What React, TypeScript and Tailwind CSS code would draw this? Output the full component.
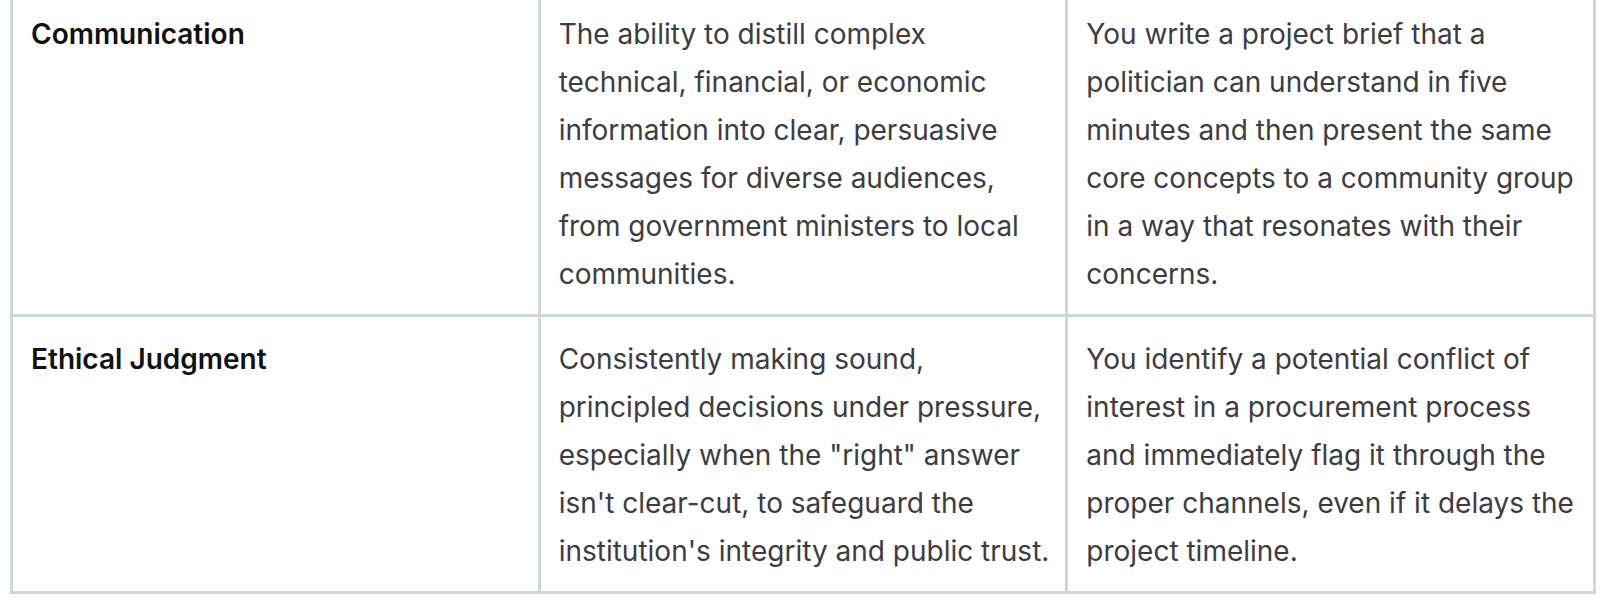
const ROWS = [
  {
    skill: "Communication",
    meaning:
      "The ability to distill complex technical, financial, or economic information into clear, persuasive messages for diverse audiences, from government ministers to local communities.",
    example:
      "You write a project brief that a politician can understand in five minutes and then present the same core concepts to a community group in a way that resonates with their concerns.",
  },
  {
    skill: "Ethical Judgment",
    meaning:
      "Consistently making sound, principled decisions under pressure, especially when the \"right\" answer isn't clear-cut, to safeguard the institution's integrity and public trust.",
    example:
      "You identify a potential conflict of interest in a procurement process and immediately flag it through the proper channels, even if it delays the project timeline.",
  },
];

export default function App() {
  return (
    <div className="min-h-screen bg-white px-[10px] pb-[10px] font-['Inter','Liberation_Sans',sans-serif]">
      <table className="-mt-[11px] w-full table-fixed border-collapse border-[3px] border-[#cdd5df]">
        <tbody>
          {ROWS.map((r) => (
            <tr key={r.skill}>
              <td className="border-[3px] border-[#cdd5df] pl-[18px] pr-[14px] pt-[18px] pb-[16px] align-top text-[28px] leading-[48px] font-semibold text-[#111111]">
                {r.skill}
              </td>
              <td className="border-[3px] border-[#cdd5df] pl-[18px] pr-[14px] pt-[18px] pb-[16px] align-top text-[28px] leading-[48px] text-[#3c3c41]">
                {r.meaning}
              </td>
              <td className="border-[3px] border-[#cdd5df] pl-[18px] pr-[14px] pt-[18px] pb-[16px] align-top text-[28px] leading-[48px] text-[#3c3c41]">
                {r.example}
              </td>
            </tr>
          ))}
        </tbody>
      </table>
    </div>
  );
}
